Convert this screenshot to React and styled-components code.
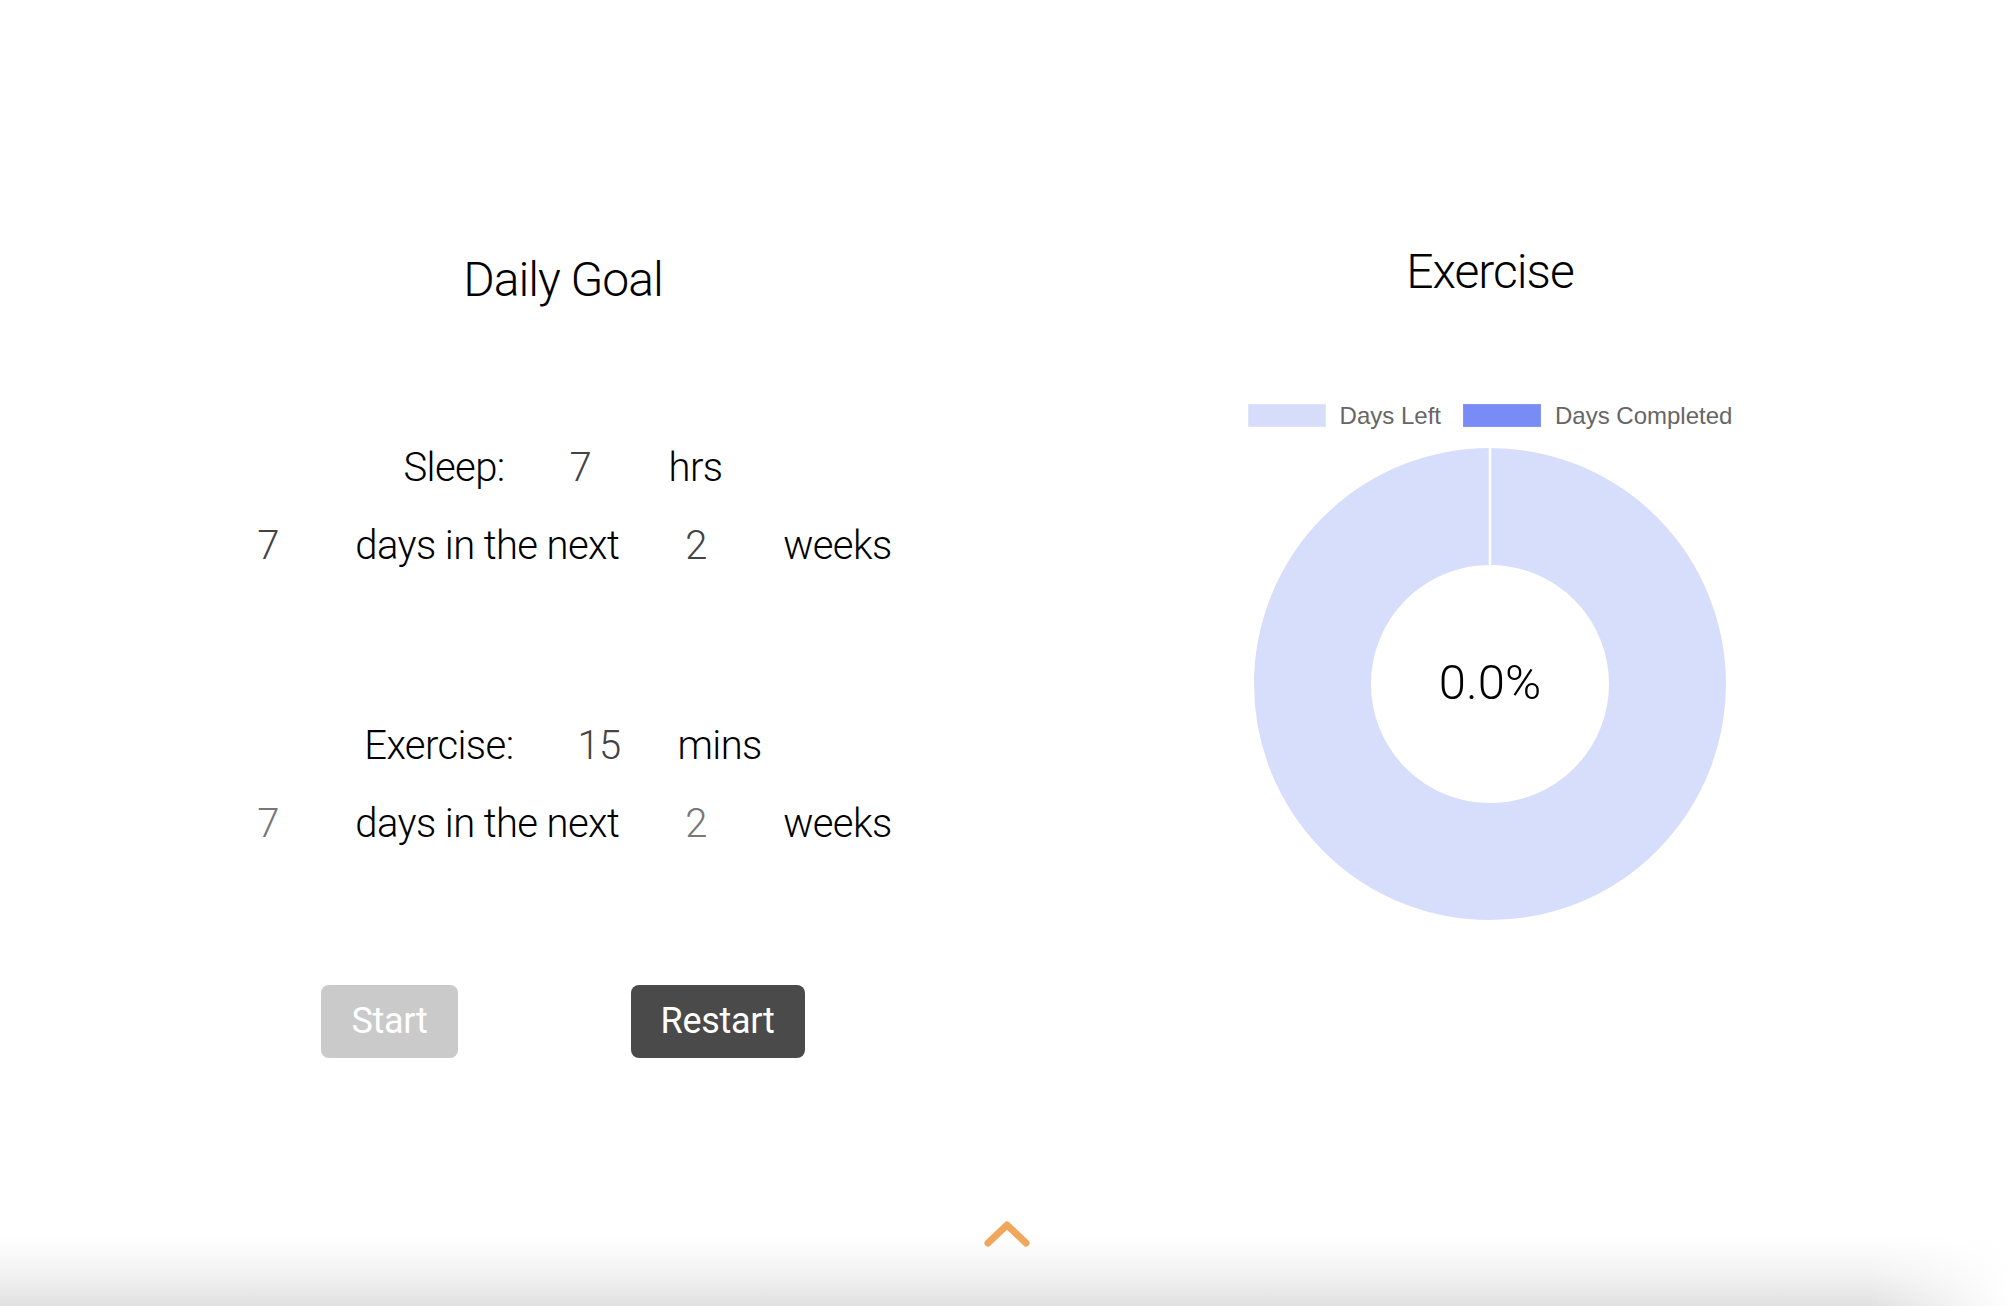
import React from 'react';
import styled, { createGlobalStyle } from 'styled-components';

const GlobalStyle = createGlobalStyle`
    html, body {
        margin: 0;
        padding: 0;
        background: #fff;
    }
    body {
        font-family: Roboto, 'Noto Sans', sans-serif;
        color: #000;
        overflow: hidden;
    }
`;

const Page = styled.div`
    position: relative;
    width: 2010px;
    height: 1306px;
    overflow: hidden;
    background: #fff;
`;

const Columns = styled.div`
    display: grid;
    grid-template-columns: 926px 928px;
    padding: 0 56px 0 100px;
`;

const GoalColumn = styled.div`
    display: flex;
    flex-direction: column;
    align-items: center;
    padding-top: 251px;
`;

const ChartColumn = styled.div`
    display: flex;
    flex-direction: column;
    align-items: center;
    padding-top: 243px;
`;

const Heading = styled.h1`
    margin: 0;
    font-size: 48px;
    font-weight: 300;
    line-height: 1.2;
    letter-spacing: -1px;
    color: #000;
`;

const GoalBlock = styled.div`
    display: flex;
    flex-direction: column;
    align-items: center;
    gap: 30px;
    margin-top: ${(p) => p.$top}px;
`;

const Row = styled.div`
    display: flex;
    align-items: baseline;
    padding-left: ${(p) => p.$shift || 0}px;
    font-size: 40px;
    font-weight: 300;
    line-height: 48px;
    letter-spacing: -0.6px;
    white-space: nowrap;
`;

const Label = styled.span`
    color: #000;
    margin-right: ${(p) => p.$gap || 0}px;
`;

const Value = styled.span`
    display: inline-block;
    width: ${(p) => p.$width || 98}px;
    color: ${(p) => p.$color || '#444'};
`;

const ButtonRow = styled.div`
    display: flex;
    gap: 173px;
    margin-top: 137px;
`;

const Button = styled.button`
    height: 73px;
    padding: 0 30px;
    border: none;
    border-radius: 8px;
    font-family: Roboto, sans-serif;
    font-size: 36px;
    font-weight: 400;
    letter-spacing: -0.3px;
    color: #fff;
    background: ${(p) => (p.$disabled ? '#cacaca' : '#4a4a4a')};
    cursor: ${(p) => (p.$disabled ? 'default' : 'pointer')};
`;

const Legend = styled.div`
    display: flex;
    align-items: center;
    margin-top: 101px;
    font-family: 'Liberation Sans', Arial, sans-serif;
    font-size: 24px;
    color: #666;
`;

const LegendItem = styled.div`
    display: flex;
    align-items: center;
    gap: 14px;
    margin-right: ${(p) => p.$gap || 0}px;
`;

const Swatch = styled.span`
    display: inline-block;
    width: 76px;
    height: 21px;
    background: ${(p) => p.$color};
    border: 1px solid ${(p) => p.$border};
`;

const DonutWrap = styled.div`
    position: relative;
    width: 474px;
    height: 474px;
    margin-top: 17px;
`;

const DonutLabel = styled.div`
    position: absolute;
    inset: 0;
    display: flex;
    align-items: center;
    justify-content: center;
    font-size: 49px;
    font-weight: 300;
    color: #000;
    padding-bottom: 2px;
`;

const Footer = styled.div`
    position: absolute;
    left: 0;
    right: 0;
    bottom: 0;
    height: 70px;
    background: linear-gradient(to bottom, rgba(255, 255, 255, 0) 0%, #f2f2f2 55%, #e1e1e1 100%);
    -webkit-mask-image: linear-gradient(to right, #000 0%, #000 93%, transparent 100%);
    mask-image: linear-gradient(to right, #000 0%, #000 93%, transparent 100%);
`;

const TopButton = styled.div`
    position: absolute;
    left: 980px;
    top: 1216px;
    width: 54px;
    height: 34px;
    cursor: pointer;
`;

const Donut = ({ percent }) => {
    const r = 177.5;
    const c = 2 * Math.PI * r;
    return (
        <DonutWrap>
            <svg width="474" height="474" viewBox="0 0 474 474">
                <circle cx="237" cy="237" r={r} fill="none" stroke="#d7defb" strokeWidth="117" />
                <circle
                    cx="237"
                    cy="237"
                    r={r}
                    fill="none"
                    stroke="#7a8cf5"
                    strokeWidth="117"
                    strokeDasharray={`${(c * percent) / 100} ${c}`}
                    transform="rotate(-90 237 237)"
                />
                <line x1="237" y1="0" x2="237" y2="119" stroke="#fff" strokeWidth="2.5" />
            </svg>
            <DonutLabel>{percent.toFixed(1)}%</DonutLabel>
        </DonutWrap>
    );
};

const App = () => {
    const goals = [
        { name: 'Sleep:', amount: 7, unit: 'hrs', days: 7, weeks: 2, amountColor: '#444', color: '#444', gap: 65, width: 99, top: 135 },
        { name: 'Exercise:', amount: 15, unit: 'mins', days: 7, weeks: 2, amountColor: '#444', color: '#777', gap: 64, width: 100, top: 152 },
    ];

    return (
        <>
            <GlobalStyle />
            <Page>
                <Columns>
                    <GoalColumn>
                        <Heading>Daily Goal</Heading>
                        {goals.map((g) => (
                            <GoalBlock key={g.name} $top={g.top}>
                                <Row>
                                    <Label $gap={g.gap}>{g.name}</Label>
                                    <Value $width={g.width} $color={g.amountColor}>
                                        {g.amount}
                                    </Value>
                                    <Label>{g.unit}</Label>
                                </Row>
                                <Row $shift={23}>
                                    <Value $color={g.color}>{g.days}</Value>
                                    <Label $gap={66}>days in the next</Label>
                                    <Value $color={g.color}>{g.weeks}</Value>
                                    <Label>weeks</Label>
                                </Row>
                            </GoalBlock>
                        ))}
                        <ButtonRow>
                            <Button $disabled>Start</Button>
                            <Button>Restart</Button>
                        </ButtonRow>
                    </GoalColumn>
                    <ChartColumn>
                        <Heading>Exercise</Heading>
                        <Legend>
                            <LegendItem $gap={22}>
                                <Swatch $color="#d6ddfb" $border="#dfe4fc" />
                                <span>Days Left</span>
                            </LegendItem>
                            <LegendItem>
                                <Swatch $color="#798cf5" $border="#8597f6" />
                                <span>Days Completed</span>
                            </LegendItem>
                        </Legend>
                        <Donut percent={0} />
                    </ChartColumn>
                </Columns>
                <Footer />
                <TopButton>
                    <svg width="54" height="34" viewBox="0 0 54 34">
                        <polyline
                            points="8,27 27,9 46,27"
                            fill="none"
                            stroke="#f0a75c"
                            strokeWidth="7"
                            strokeLinecap="round"
                            strokeLinejoin="round"
                        />
                    </svg>
                </TopButton>
            </Page>
        </>
    );
};

export default App;
